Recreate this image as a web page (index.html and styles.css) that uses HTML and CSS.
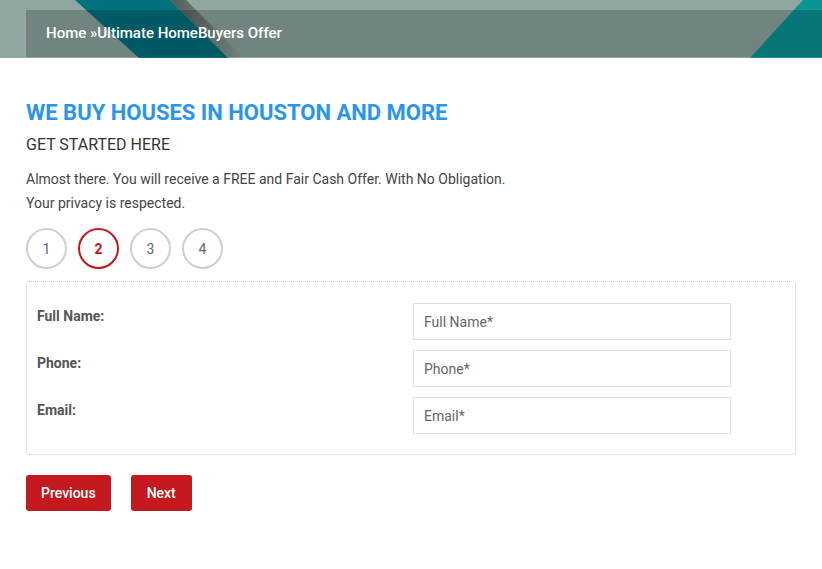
FILE: index.html
```html
<!DOCTYPE html>
<html>
<head>
<meta charset="utf-8">
<link rel="stylesheet" href="styles.css">
</head>
<body>
<header class="banner">
  <svg class="banner-art" width="822" height="58" viewBox="0 0 822 58" preserveAspectRatio="none">
    <defs>
      <linearGradient id="sh" x1="0" y1="0" x2="1" y2="0">
        <stop offset="0" stop-color="#000" stop-opacity="0.45"/>
        <stop offset="1" stop-color="#000" stop-opacity="0"/>
      </linearGradient>
    </defs>
    <rect width="822" height="58" fill="#8fa6a1"/>
    <polygon points="170,0 186,0 244,58 228,58" fill="url(#sh)"/>
    <polygon points="75,0 170,0 228,58 139,58" fill="#00717f"/>
    <polygon points="803,0 822,0 822,58 750,58" fill="#0a9494"/>
  </svg>
  <div class="crumb-bar">
    <nav class="crumbs"><a href="#">Home</a> »Ultimate HomeBuyers Offer</nav>
  </div>
</header>

<main class="page">
  <h1 class="title">WE BUY HOUSES IN HOUSTON AND MORE</h1>
  <h2 class="subtitle">GET STARTED HERE</h2>
  <p class="lead">Almost there. You will receive a FREE and Fair Cash Offer. With No Obligation.</p>
  <p class="lead">Your privacy is respected.</p>

  <ol class="steps">
    <li class="step">1</li>
    <li class="step active">2</li>
    <li class="step">3</li>
    <li class="step">4</li>
  </ol>

  <form class="form-box">
    <div class="row">
      <label class="label">Full Name:</label>
      <input class="field" type="text" placeholder="Full Name*">
    </div>
    <div class="row">
      <label class="label">Phone:</label>
      <input class="field" type="text" placeholder="Phone*">
    </div>
    <div class="row">
      <label class="label">Email:</label>
      <input class="field" type="text" placeholder="Email*">
    </div>
  </form>

  <div class="actions">
    <button class="btn" type="button">Previous</button>
    <button class="btn btn-next" type="button">Next</button>
  </div>
</main>
</body>
</html>
```

FILE: styles.css
```css
* { box-sizing: border-box; }
html, body { margin: 0; padding: 0; background: #fff; }
body { font-family: Roboto, "Liberation Sans", sans-serif; color: #444; }

.banner {
  position: relative;
  height: 58px;
  padding-top: 10px;
  overflow: hidden;
}
.banner-art {
  position: absolute;
  left: 0;
  top: 0;
  display: block;
}
.crumb-bar {
  position: relative;
  margin-left: 26px;
  height: 47px;
  background: rgba(0, 0, 0, 0.2);
  display: flex;
  align-items: center;
  padding-left: 20px;
  padding-bottom: 2px;
}
.crumbs {
  color: #fff;
  font-size: 15px;
  font-weight: 500;
}
.crumbs a { color: #fff; text-decoration: none; }

.page { padding: 0 26px; }

.title {
  margin: 42px 0 0;
  font-size: 22px;
  line-height: 26px;
  font-weight: 700;
  color: #2b95e9;
}
.subtitle {
  margin: 9px 0 0;
  font-size: 16px;
  line-height: 20px;
  font-weight: 400;
  color: #333;
}
.lead {
  margin: 0;
  font-size: 14px;
  line-height: 24px;
  color: #444;
}
.subtitle + .lead { margin-top: 12px; }

.steps {
  list-style: none;
  margin: 13px 0 0;
  padding: 0;
  display: flex;
  gap: 11px;
}
.step {
  width: 41px;
  height: 41px;
  border: 2px solid #cfcfcf;
  border-radius: 50%;
  display: flex;
  align-items: center;
  justify-content: center;
  font-size: 14px;
  color: #5a6a7a;
}
.step.active {
  border-color: #c4161c;
  color: #c4161c;
  font-weight: 700;
}

.form-box {
  margin-top: 12px;
  border: 1px dotted #c8c8c8;
  border-radius: 3px;
  padding: 21px 10px 20px 10px;
  display: flex;
  flex-direction: column;
  gap: 10px;
}
.row {
  display: grid;
  grid-template-columns: 376px 318px;
  align-items: start;
}
.label {
  padding-top: 5px;
  font-size: 14px;
  font-weight: 700;
  color: #555;
}
.field {
  height: 37px;
  border: 1px solid #e0e0e0;
  padding: 0 10px;
  font-family: Roboto, "Liberation Sans", sans-serif;
  font-size: 14px;
  color: #555;
  background: #fff;
  outline: none;
}
.field::placeholder { color: #666; }

.actions {
  margin-top: 20px;
  display: flex;
  gap: 20px;
}
.btn {
  height: 36px;
  padding: 0 15px;
  border: 0;
  border-radius: 3px;
  background: #c4191e;
  color: #fff;
  font-family: Roboto, "Liberation Sans", sans-serif;
  font-size: 14px;
  font-weight: 500;
}
.btn-next { padding: 0 16px; }
```
